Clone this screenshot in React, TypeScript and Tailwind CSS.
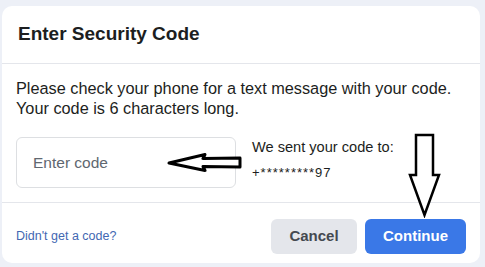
export default function App() {
  return (
    <div className="w-[485px] h-[267px] bg-[#edf0f7] pt-[6px] pl-[2px] pr-[5px] pb-[4px] font-['Liberation_Sans',Arial,sans-serif]">
      <div className="relative h-full bg-white rounded-[10px] flex flex-col">
        {/* Header */}
        <div className="h-[58px] px-[16px] flex items-center border-b border-[#e4e6eb]">
          <h2 className="text-[19px] font-bold text-[#1c1e21]">Enter Security Code</h2>
        </div>

        {/* Body */}
        <div className="px-[14px] pt-[14px] h-[139px] border-b border-[#e4e6eb]">
          <p className="text-[16.3px] leading-[20px] text-[#1c1e21]">
            Please check your phone for a text message with your code.
            <br />
            Your code is 6 characters long.
          </p>
          <div className="mt-[19px] flex items-start gap-[16px]">
            <div className="w-[220px] h-[51px] border border-[#dddfe2] rounded-[6px] flex items-center px-[16px]">
              <span className="text-[15.5px] text-[#606770]">Enter code</span>
            </div>
            <div className="pt-[1px]">
              <p className="text-[14.6px] text-[#1c1e21] leading-[18px]">We sent your code to:</p>
              <p className="mt-[7px] text-[13px] tracking-[1px] text-[#1c1e21]">+*********97</p>
            </div>
          </div>
        </div>

        {/* Footer */}
        <div className="flex-1 px-[14px] pt-[6px] flex items-center justify-between">
          <a className="text-[12.5px] text-[#4267b2]">Didn't get a code?</a>
          <div className="flex gap-[8px]">
            <button className="w-[86px] h-[35px] rounded-[6px] bg-[#e4e6eb] text-[#444950] text-[15px] font-bold">
              Cancel
            </button>
            <button className="w-[101px] h-[35px] rounded-[6px] bg-[#3a78e7] text-white text-[15px] font-bold">
              Continue
            </button>
          </div>
        </div>

        {/* annotation arrows */}
        <svg className="absolute left-[158px] top-[136px]" width="90" height="30" viewBox="0 0 90 30">
          <path
            d="M9 21 L45 12.5 L43 16.5 L80 16 L80 25 L43 24.5 L45 28.5 Z"
            fill="white"
            stroke="black"
            strokeWidth="3"
            strokeLinejoin="round"
          />
        </svg>
        <svg className="absolute left-[404px] top-[126px]" width="40" height="86" viewBox="0 0 40 86">
          <path
            d="M10 3 L27 3 L27 43 L33 43 L18.5 83 L4 43 L10 43 Z"
            fill="white"
            stroke="black"
            strokeWidth="2.5"
            strokeLinejoin="miter"
          />
        </svg>
      </div>
    </div>
  );
}
